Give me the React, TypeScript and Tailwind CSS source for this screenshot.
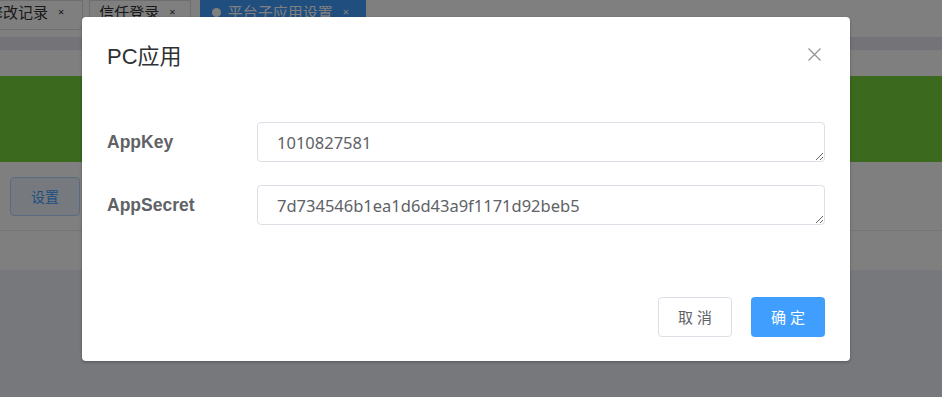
import React from 'react';

const font = { fontFamily: '"Noto Sans", "Noto Sans CJK SC", sans-serif' };

function Tab({ label, active, className }: { label: string; active?: boolean; className?: string }) {
  return (
    <div
      className={`h-[30px] flex items-center gap-[10px] pb-[5px] text-[15px] border rounded-b-[4px] ${
        active ? 'bg-[#409eff] border-[#409eff] text-white' : 'bg-white border-[#d8dce5] text-[#333]'
      } ${className ?? ''}`}
    >
      {active && <span className="w-[9px] h-[9px] rounded-full bg-white mr-[-3px]" />}
      <span>{label}</span>
      <span className="text-[11px]">×</span>
    </div>
  );
}

export default function App() {
  return (
    <div className="relative w-[942px] h-[397px] overflow-hidden bg-[#eef0f7]" style={font}>
      {/* page underneath */}
      <div className="flex flex-col">
        <div className="h-[37px] bg-white flex items-start">
          <Tab label="修改记录" className="-ml-[23px] pl-[10px] pr-[18px]" />
          <Tab label="信任登录" className="ml-[6px] pl-[9px] pr-[14px]" />
          <Tab label="平台子应用设置" active className="ml-[9px] pl-[11px] pr-[16px]" />
        </div>
        <div className="h-[13px] bg-[#e8e8f0]" />
        <div className="h-[220px] bg-white flex flex-col">
          <div className="mt-[26px] h-[86px] bg-[#76d43e]" />
          <div className="h-[69px] flex items-center pl-[10px] border-b border-[#eaeaea]">
            <button className="w-[70px] h-[39px] rounded-[4px] border border-[#b3d8ff] bg-[#ecf5ff] text-[#409eff] text-[14px]">
              设置
            </button>
          </div>
        </div>
      </div>

      {/* overlay */}
      <div className="absolute inset-0 bg-black/50" />

      {/* dialog */}
      <div className="absolute left-[82px] top-[17px] w-[768px] h-[344px] bg-white rounded-[4px] shadow-[0_1px_3px_rgba(0,0,0,0.3)] flex flex-col">
        <div className="pt-[27px] px-[25px] flex items-center justify-between h-[53px]">
          <span
            className="text-[22px] leading-[26px] text-[#303133]"
            style={{ fontFamily: '"Liberation Sans", "Noto Sans CJK SC", sans-serif' }}
          >
            PC应用
          </span>
          <svg width="13" height="13" viewBox="0 0 13 13" className="mr-[4px] mt-[-6px]">
            <path d="M0.5 0.5 L12.5 12.5 M12.5 0.5 L0.5 12.5" stroke="#909399" strokeWidth="1.2" />
          </svg>
        </div>

        <div className="mt-[52px] px-[25px] flex flex-col gap-[23px]">
          {[
            ['AppKey', '1010827581'],
            ['AppSecret', '7d734546b1ea1d6d43a9f1171d92beb5'],
          ].map(([label, value]) => (
            <div key={label} className="flex items-center">
              <span
                className="w-[150px] text-[17.5px] font-bold text-[#606266]"
                style={{ fontFamily: '"Liberation Sans", sans-serif' }}
              >
                {label}
              </span>
              <textarea
                rows={1}
                readOnly
                defaultValue={value}
                className="flex-1 h-[40px] px-[19px] py-[8px] leading-[23px] text-[16.5px] text-[#606266] border border-[#dcdfe6] rounded-[4px] outline-none"
              />
            </div>
          ))}
        </div>

        <div className="mt-auto pb-[24px] pr-[25px] flex justify-end gap-[19px]">
          <button className="w-[74px] h-[40px] rounded-[4px] border border-[#dcdfe6] bg-white text-[#606266] text-[15px] tracking-[4px] pl-[4px]">
            取消
          </button>
          <button className="w-[74px] h-[40px] rounded-[4px] bg-[#409eff] text-white text-[15px] tracking-[4px] pl-[4px]">
            确定
          </button>
        </div>
      </div>
    </div>
  );
}
